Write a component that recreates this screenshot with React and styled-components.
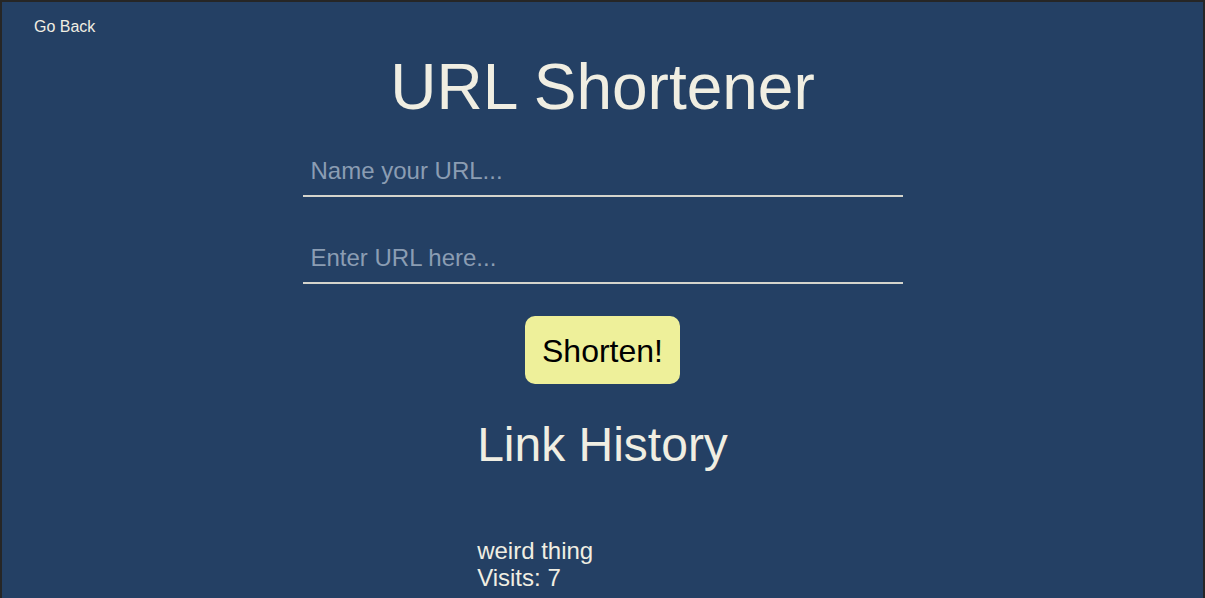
import React, { useState } from 'react';
import styled, { createGlobalStyle } from 'styled-components';

const GlobalStyle = createGlobalStyle`
  html, body {
    margin: 0;
    padding: 0;
    background: #244064;
  }
  body {
    font-family: "Liberation Sans", Arial, Helvetica, sans-serif;
  }
  * {
    box-sizing: border-box;
  }
`

const Page = styled.div`
  min-height: 598px;
  background: #244064;
  border: 2px solid #262626;
  border-bottom: none;
  color: #f0eee2;
  overflow: hidden;
`

const TopBar = styled.div`
  padding: 16px 0 0 32px;
  height: 49px;
`

const BackLink = styled.a`
  font-size: 16px;
  line-height: 18.4px;
  color: #f0eee2;
  text-decoration: none;
  cursor: pointer;
`

const Main = styled.main`
  display: flex;
  flex-direction: column;
  align-items: center;
`

const Title = styled.h1`
  margin: 0;
  font-size: 64px;
  font-weight: 400;
  line-height: 73.6px;
`

const Form = styled.form`
  width: 600px;
  display: flex;
  flex-direction: column;
  align-items: center;
  gap: 34px;
  margin-top: 19px;
`

const Input = styled.input`
  width: 100%;
  height: 53px;
  padding: 14px 8px 10px;
  font-family: inherit;
  font-size: 24px;
  color: #f0eee2;
  background: transparent;
  border: none;
  border-bottom: 2px solid #d4d4cc;
  outline: none;

  &::placeholder {
    color: #8b9db3;
  }
`

const Button = styled.button`
  margin-top: -2px;
  padding: 17px 17px 15px;
  font-family: inherit;
  font-size: 32px;
  line-height: 36.8px;
  color: #000;
  background: #eef09a;
  border: none;
  border-radius: 10px;
  cursor: pointer;
`

const History = styled.section`
  margin-top: 33px;
  display: flex;
  flex-direction: column;
  align-items: flex-start;
`

const SubTitle = styled.h2`
  margin: 0 0 64px;
  font-size: 48px;
  font-weight: 400;
  line-height: 55.2px;
`

const LinkItem = styled.div`
  font-size: 24px;
  line-height: 27.6px;
`

const links = [{ name: 'weird thing', visits: 7 }]

export default function App() {
  const [name, setName] = useState('')
  const [url, setUrl] = useState('')

  return (
    <>
      <GlobalStyle />
      <Page>
        <TopBar>
          <BackLink>Go Back</BackLink>
        </TopBar>
        <Main>
          <Title>URL Shortener</Title>
          <Form onSubmit={(e) => e.preventDefault()}>
            <Input
              placeholder="Name your URL..."
              value={name}
              onChange={(e) => setName(e.target.value)}
            />
            <Input
              placeholder="Enter URL here..."
              value={url}
              onChange={(e) => setUrl(e.target.value)}
            />
            <Button type="submit">Shorten!</Button>
          </Form>
          <History>
            <SubTitle>Link History</SubTitle>
            {links.map((link, i) => (
              <LinkItem key={i}>
                <div>{link.name}</div>
                <div>Visits: {link.visits}</div>
              </LinkItem>
            ))}
          </History>
        </Main>
      </Page>
    </>
  )
}
